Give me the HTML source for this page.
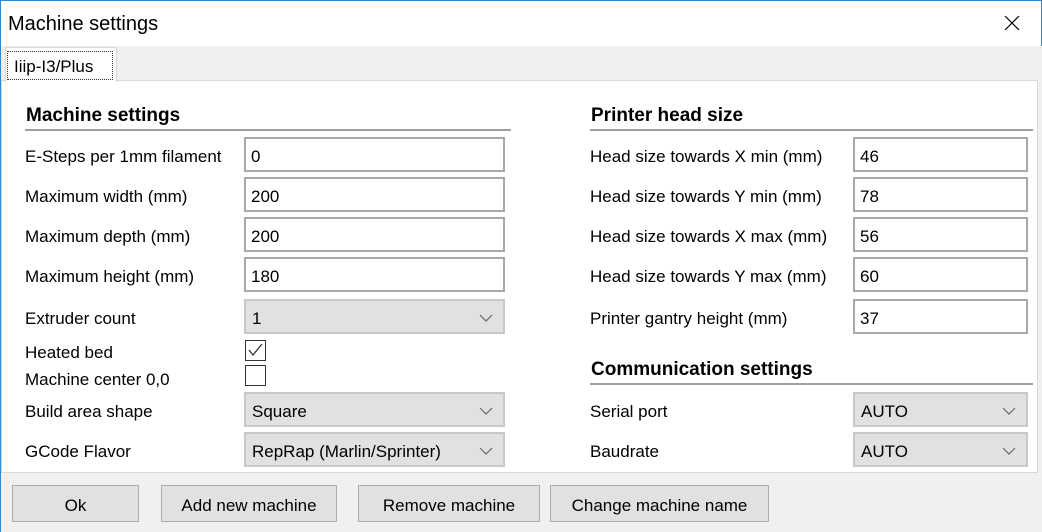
<!DOCTYPE html>
<html><head><meta charset="utf-8"><style>
*{box-sizing:border-box;margin:0;padding:0}
body{width:1042px;height:532px;overflow:hidden;background:#f0f0f0;font-family:"Liberation Sans","DejaVu Sans",sans-serif;font-size:17px;color:#000;position:relative}
.a{position:absolute;white-space:nowrap}
.titlebar{left:0;top:0;width:1042px;height:46px;background:#fff;border-left:1px solid #2b88d8;border-top:1px solid #2b88d8;border-right:1px solid #2b88d8}
.lbl{line-height:38px;height:34px}
.in{background:#fff;border:2px solid #a8a8a8;height:35px;line-height:35px;padding-left:5px}
.sel{background:#e1e1e1;border:2px solid #c8c8c8;height:35px;line-height:35px;padding-left:6px}
.sel svg{position:absolute;right:10px;top:13px}
.hd{font-weight:bold;font-size:19px}
.line{height:2px;background:#a0a0a0}
.cb{width:21px;height:21px;border:1.5px solid #333;background:#fff}
.btn{background:#e1e1e1;border:1.5px solid #adadad;height:37px;line-height:39px;text-align:center}
</style></head><body>
<div class="a titlebar"></div>
<div class="a" style="left:0;top:0;width:1px;height:532px;background:#2b88d8"></div>
<div class="a" style="left:8px;top:13px;font-size:20px">Machine settings</div>
<svg class="a" style="left:1004px;top:15px" width="16" height="16"><path d="M1 1L15 15M15 1L1 15" stroke="#000" stroke-width="1.2"/></svg>
<div class="a" style="left:1px;top:80px;width:1037px;height:393px;background:#fff;border:1px solid #d9d9d9"></div>
<div class="a" style="left:5px;top:47px;width:112px;height:35px;background:#fff;border:1px solid #d9d9d9;border-bottom:none"></div>
<div class="a" style="left:7px;top:51px;width:106px;height:29px;border:1px dotted #333;padding-left:6px;line-height:29px;font-size:17px">Iiip-I3/Plus</div>

<div class="a hd" style="left:26px;top:105px">Machine settings</div>
<div class="a line" style="left:25px;top:129px;width:486px"></div>
<div class="a lbl" style="left:25px;top:138px">E-Steps per 1mm filament</div>
<div class="a lbl" style="left:25px;top:178px">Maximum width (mm)</div>
<div class="a lbl" style="left:25px;top:218px">Maximum depth (mm)</div>
<div class="a lbl" style="left:25px;top:258px">Maximum height (mm)</div>
<div class="a lbl" style="left:25px;top:300px">Extruder count</div>
<div class="a" style="left:25px;top:343px">Heated bed</div>
<div class="a" style="left:25px;top:370px">Machine center 0,0</div>
<div class="a lbl" style="left:25px;top:393px">Build area shape</div>
<div class="a lbl" style="left:25px;top:433px">GCode Flavor</div>

<div class="a in" style="left:244px;top:137px;width:261px">0</div>
<div class="a in" style="left:244px;top:177px;width:261px">200</div>
<div class="a in" style="left:244px;top:217px;width:261px">200</div>
<div class="a in" style="left:244px;top:257px;width:261px">180</div>
<div class="a sel" style="left:244px;top:299px;width:261px">1<svg width="14" height="9"><path d="M1 1L7 7L13 1" fill="none" stroke="#666" stroke-width="1.2"/></svg></div>
<div class="a cb" style="left:245px;top:340px"><svg width="18" height="18" style="position:absolute;left:0;top:0"><path d="M3 9L7 14L16 3" fill="none" stroke="#333" stroke-width="1.3"/></svg></div>
<div class="a cb" style="left:245px;top:365px"></div>
<div class="a sel" style="left:244px;top:392px;width:261px">Square<svg width="14" height="9"><path d="M1 1L7 7L13 1" fill="none" stroke="#666" stroke-width="1.2"/></svg></div>
<div class="a sel" style="left:244px;top:432px;width:261px">RepRap (Marlin/Sprinter)<svg width="14" height="9"><path d="M1 1L7 7L13 1" fill="none" stroke="#666" stroke-width="1.2"/></svg></div>

<div class="a hd" style="left:591px;top:105px">Printer head size</div>
<div class="a line" style="left:590px;top:129px;width:443px"></div>
<div class="a lbl" style="left:590px;top:138px">Head size towards X min (mm)</div>
<div class="a lbl" style="left:590px;top:178px">Head size towards Y min (mm)</div>
<div class="a lbl" style="left:590px;top:218px">Head size towards X max (mm)</div>
<div class="a lbl" style="left:590px;top:258px">Head size towards Y max (mm)</div>
<div class="a lbl" style="left:590px;top:300px">Printer gantry height (mm)</div>
<div class="a in" style="left:853px;top:137px;width:175px">46</div>
<div class="a in" style="left:853px;top:177px;width:175px">78</div>
<div class="a in" style="left:853px;top:217px;width:175px">56</div>
<div class="a in" style="left:853px;top:257px;width:175px">60</div>
<div class="a in" style="left:853px;top:299px;width:175px">37</div>
<div class="a hd" style="left:591px;top:359px">Communication settings</div>
<div class="a line" style="left:590px;top:383px;width:443px"></div>
<div class="a lbl" style="left:590px;top:393px">Serial port</div>
<div class="a lbl" style="left:590px;top:433px">Baudrate</div>
<div class="a sel" style="left:853px;top:392px;width:175px">AUTO<svg width="14" height="9"><path d="M1 1L7 7L13 1" fill="none" stroke="#666" stroke-width="1.2"/></svg></div>
<div class="a sel" style="left:853px;top:432px;width:175px">AUTO<svg width="14" height="9"><path d="M1 1L7 7L13 1" fill="none" stroke="#666" stroke-width="1.2"/></svg></div>

<div class="a btn" style="left:12px;top:485px;width:127px">Ok</div>
<div class="a btn" style="left:161px;top:485px;width:176px">Add new machine</div>
<div class="a btn" style="left:358px;top:485px;width:182px">Remove machine</div>
<div class="a btn" style="left:550px;top:485px;width:219px">Change machine name</div>
</body></html>
